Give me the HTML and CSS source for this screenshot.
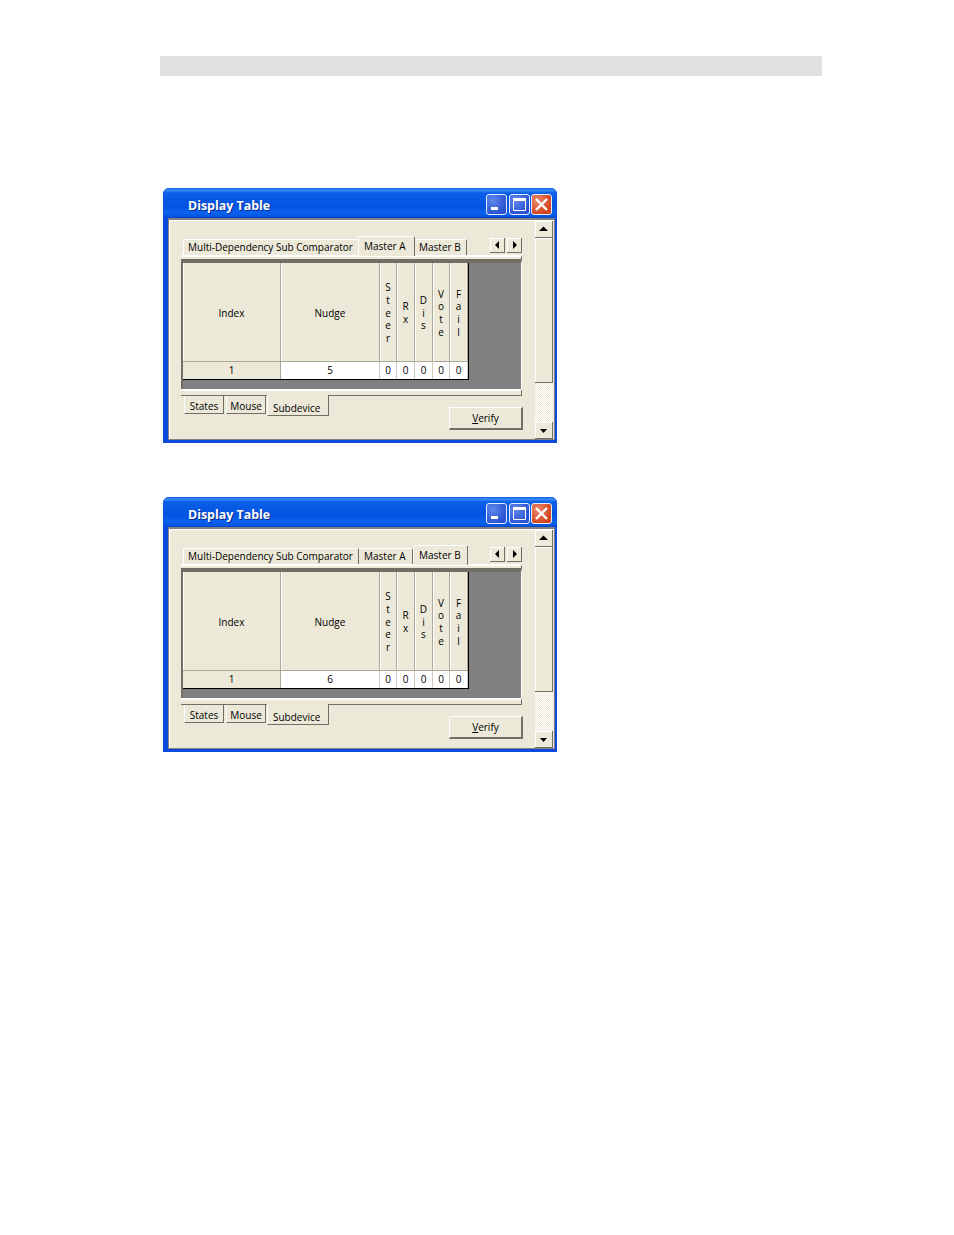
FILE: index.html
```html
<!DOCTYPE html>
<html lang="en">

<head>
    <meta charset="UTF-8">
    <title>Display Table</title>
    <link rel="stylesheet" href="styles.css">
</head>

<body>
    <div class="page-bar"></div>

    <!-- first window: Master A selected -->
    <div class="window first">
        <div class="titlebar">
            <span class="title">Display Table</span>
            <div class="caption-buttons">
                <div class="cap-btn"><svg viewBox="0 0 21 21" width="21" height="21"><rect x="5" y="13" width="7" height="3" fill="#fff"/></svg></div>
                <div class="cap-btn"><svg viewBox="0 0 21 21" width="21" height="21"><path d="M4.500 4.500h12v12h-12z" fill="none" stroke="#fff"/><rect x="4" y="4" width="13" height="3" fill="#fff"/></svg></div>
                <div class="cap-btn close"><svg viewBox="0 0 21 21" width="21" height="21"><path d="M5 5l11 11M16 5L5 16" stroke="#fff" stroke-width="2.400"/></svg></div>
            </div>
        </div>
        <div class="client">
            <div class="main">
                <div class="tabs-top">
                    <div class="tab wide">Multi-Dependency Sub Comparator</div>
                    <div class="tab tab-a active">Master A</div>
                    <div class="tab tab-b">Master B</div>
                    <div class="tab-arrows">
                        <div class="btn-small"><svg viewBox="0 0 15 15" width="15" height="15"><path d="M9 3v8L5 7z"/></svg></div>
                        <div class="btn-small"><svg viewBox="0 0 15 15" width="15" height="15"><path d="M6 3v8l4-4z"/></svg></div>
                    </div>
                </div>
                <div class="bar"></div>
                <div class="grid-wrap">
                    <div class="grid">
                        <div class="head">Index</div>
                        <div class="head">Nudge</div>
                        <div class="head"><span class="stack">S<br>t<br>e<br>e<br>r</span></div>
                        <div class="head"><span class="stack">R<br>x</span></div>
                        <div class="head"><span class="stack">D<br>i<br>s</span></div>
                        <div class="head"><span class="stack">V<br>o<br>t<br>e</span></div>
                        <div class="head"><span class="stack">F<br>a<br>i<br>l</span></div>
                        <div class="cell index">1</div>
                        <div class="cell">5</div>
                        <div class="cell">0</div>
                        <div class="cell">0</div>
                        <div class="cell">0</div>
                        <div class="cell">0</div>
                        <div class="cell">0</div>
                    </div>
                </div>
                <div class="bar bar-low"></div>
                <div class="bottom-row">
                    <div class="tabs-bottom">
                        <div class="btab">States</div>
                        <div class="btab">Mouse</div>
                        <div class="btab active">Subdevice</div>
                    </div>
                    <div class="verify"><u>V</u>erify</div>
                </div>
            </div>
            <div class="scrollbar">
                <div class="btn-scroll"><svg viewBox="0 0 17 17" width="17" height="17"><path d="M4 10h9L8.500 5.500z"/></svg></div>
                <div class="thumb"></div>
                <div class="track"></div>
                <div class="btn-scroll"><svg viewBox="0 0 17 17" width="17" height="17"><path d="M5 7h7l-3.500 4z"/></svg></div>
            </div>
        </div>
    </div>

    <!-- second window: Master B selected -->
    <div class="window second">
        <div class="titlebar">
            <span class="title">Display Table</span>
            <div class="caption-buttons">
                <div class="cap-btn"><svg viewBox="0 0 21 21" width="21" height="21"><rect x="5" y="13" width="7" height="3" fill="#fff"/></svg></div>
                <div class="cap-btn"><svg viewBox="0 0 21 21" width="21" height="21"><path d="M4.500 4.500h12v12h-12z" fill="none" stroke="#fff"/><rect x="4" y="4" width="13" height="3" fill="#fff"/></svg></div>
                <div class="cap-btn close"><svg viewBox="0 0 21 21" width="21" height="21"><path d="M5 5l11 11M16 5L5 16" stroke="#fff" stroke-width="2.400"/></svg></div>
            </div>
        </div>
        <div class="client">
            <div class="main">
                <div class="tabs-top">
                    <div class="tab wide">Multi-Dependency Sub Comparator</div>
                    <div class="tab tab-a2">Master A</div>
                    <div class="tab tab-b2 active">Master B</div>
                    <div class="tab-arrows arrows2">
                        <div class="btn-small"><svg viewBox="0 0 15 15" width="15" height="15"><path d="M9 3v8L5 7z"/></svg></div>
                        <div class="btn-small"><svg viewBox="0 0 15 15" width="15" height="15"><path d="M6 3v8l4-4z"/></svg></div>
                    </div>
                </div>
                <div class="bar"></div>
                <div class="grid-wrap">
                    <div class="grid">
                        <div class="head">Index</div>
                        <div class="head">Nudge</div>
                        <div class="head"><span class="stack">S<br>t<br>e<br>e<br>r</span></div>
                        <div class="head"><span class="stack">R<br>x</span></div>
                        <div class="head"><span class="stack">D<br>i<br>s</span></div>
                        <div class="head"><span class="stack">V<br>o<br>t<br>e</span></div>
                        <div class="head"><span class="stack">F<br>a<br>i<br>l</span></div>
                        <div class="cell index">1</div>
                        <div class="cell">6</div>
                        <div class="cell">0</div>
                        <div class="cell">0</div>
                        <div class="cell">0</div>
                        <div class="cell">0</div>
                        <div class="cell">0</div>
                    </div>
                </div>
                <div class="bar bar-low"></div>
                <div class="bottom-row">
                    <div class="tabs-bottom">
                        <div class="btab">States</div>
                        <div class="btab">Mouse</div>
                        <div class="btab active">Subdevice</div>
                    </div>
                    <div class="verify"><u>V</u>erify</div>
                </div>
            </div>
            <div class="scrollbar">
                <div class="btn-scroll"><svg viewBox="0 0 17 17" width="17" height="17"><path d="M4 10h9L8.500 5.500z"/></svg></div>
                <div class="thumb"></div>
                <div class="track"></div>
                <div class="btn-scroll"><svg viewBox="0 0 17 17" width="17" height="17"><path d="M5 7h7l-3.500 4z"/></svg></div>
            </div>
        </div>
    </div>
</body>

</html>
```

FILE: styles.css
```css
html,
body {
    margin: 0;
    padding: 0;
}

body {
    background-color: #fff;
    font-family: "Open Sans", "Noto Sans", sans-serif;
    font-size: 10px;
    color: #000;
    height: 1235px;
    padding: 56px 0 0 160px;
    box-sizing: border-box;
}

.page-bar {
    width: 662px;
    height: 20px;
    background-color: #e0e0e0;
}

/* window frame */
.window {
    width: 394px;
    height: 255px;
    margin-left: 3px;
    box-sizing: border-box;
    background-color: #0c49dc;
    border-radius: 6px 6px 0 0;
    padding: 0 2px 3px 5px;
    display: flex;
    flex-direction: column;
}

.first {
    margin-top: 112px;
}

.second {
    margin-top: 54px;
}

.titlebar {
    height: 30px;
    margin: 0 -2px 0 -5px;
    flex-shrink: 0;
    display: flex;
    align-items: center;
    justify-content: space-between;
    padding: 2px 5px 0 25px;
    box-sizing: border-box;
    border-radius: 6px 6px 0 0;
    background: linear-gradient(to bottom, #0a5be0 0, #3b8cf6 2px, #0a5fe8 5px, #0453e0 18px, #0a62ee 25px, #0553dc 29px, #0440b8 30px);
}

.title {
    color: #fff;
    font-family: "Open Sans", sans-serif;
    font-weight: bold;
    font-size: 12.400px;
    padding-top: 2px;
    text-shadow: 1px 1px 0 #0a2f90;
}

.caption-buttons {
    display: flex;
    gap: 1.500px;
}

.cap-btn {
    width: 21px;
    height: 21px;
    box-sizing: border-box;
    border: 1px solid #e8eefc;
    border-radius: 3px;
    background: radial-gradient(circle at 30% 30%, #5f88ec, #2a52d0 75%);
    overflow: hidden;
}

.cap-btn svg {
    display: block;
    margin: -1px;
}

.close {
    background: radial-gradient(circle at 30% 30%, #ec8a6c, #d0431c 75%);
}

/* client area */
.client {
    flex-grow: 1;
    display: flex;
    background-color: #ece9d8;
    border: 1px solid #808080;
    border-top-width: 2px;
    box-shadow: inset 1px 1px 0 #fff;
    min-height: 0;
}

.main {
    width: 366px;
    padding: 16px 0 0 12px;
    box-sizing: border-box;
}

/* top tabs */
.tabs-top {
    width: 341px;
    height: 19px;
    display: flex;
    align-items: flex-end;
    position: relative;
    z-index: 1;
}

.tab {
    height: 16px;
    line-height: 15px;
    padding: 0 5px;
    box-sizing: border-box;
    white-space: nowrap;
    border-top: 1px solid #fff;
    border-right: 1px solid #716f64;
    border-radius: 2px 2px 0 0;
}

.wide {
    width: 175px;
    margin-left: 2px;
    border-left: 1px solid #fff;
    border-right: none;
    padding-left: 4px;
}

.tab.active {
    height: 20px;
    line-height: 19px;
    margin-bottom: -1px;
    background-color: #ece9d8;
    border-left: 1px solid #fff;
    border-right: 1px solid #716f64;
}

.tab-a {
    width: 57px;
}

.tab-b {
    width: 52px;
    padding-left: 4px;
}

.tab-a2 {
    width: 55px;
    padding-left: 5px;
    border-left: 1px solid #716f64;
}

.tab-b2 {
    width: 55px;
}

.tab-arrows {
    display: flex;
    gap: 2px;
    margin: 0 0 2px 23px;
}

.arrows2 {
    margin-left: 22px;
}

.btn-small {
    width: 15px;
    height: 15px;
    border-right: 1px solid #716f64;
    border-bottom: 1px solid #716f64;
    box-shadow: inset 1px 1px 0 #fff;
    box-sizing: border-box;
}

.btn-small svg,
.btn-scroll svg {
    display: block;
}

.bar {
    width: 341px;
    height: 5px;
    box-sizing: border-box;
    border-top: 2px solid #fff;
    border-right: 1px solid #716f64;
    border-bottom: 1px solid #716f64;
}

/* table */
.grid-wrap {
    width: 341px;
    height: 129px;
    box-sizing: border-box;
    background-color: #808080;
    border-top: 3px solid #716f64;
    border-left: 2px solid #716f64;
    border-right: 1px solid #fff;
}

.grid {
    width: 285px;
    display: grid;
    grid-template-columns: 98px 99px 17px 18px 18px 17px 18px;
    grid-template-rows: 99px 17px;
    border-right: 1px solid #000;
    border-bottom: 1px solid #000;
}

.head {
    background-color: #ece9d8;
    border-right: 1px solid #aca899;
    border-bottom: 1px solid #aca899;
    box-shadow: inset 1px 0 0 #fff;
    padding-top: 2px;
    box-sizing: border-box;
    display: flex;
    align-items: center;
    justify-content: center;
    text-align: center;
}

.stack {
    line-height: 12.700px;
}

.cell {
    background-color: #fff;
    border-right: 1px solid #cfccbc;
    line-height: 16px;
    text-align: center;
}

.index {
    background-color: #ece9d8;
    border-right: 1px solid #aca899;
}

/* bottom tabs + button */
.bar-low {
    height: 7px;
}

.bottom-row {
    width: 342px;
    display: flex;
    justify-content: space-between;
    align-items: flex-start;
}

.tabs-bottom {
    display: flex;
    padding-left: 3px;
    gap: 2px;
}

.btab {
    width: 40px;
    height: 18px;
    line-height: 20px;
    text-align: center;
    box-sizing: border-box;
    border-right: 1px solid #716f64;
    border-bottom: 1px solid #716f64;
    border-left: 1px solid #fff;
}

.btab.active {
    width: 62px;
    height: 21px;
    margin: -1px 0 0 -1px;
    line-height: 27px;
    text-align: left;
    padding-left: 5px;
    background-color: #ece9d8;
    position: relative;
}

.verify {
    width: 74px;
    height: 23px;
    margin-top: 11px;
    box-sizing: border-box;
    line-height: 20px;
    text-align: center;
    border-top: 1px solid #fff;
    border-left: 1px solid #fff;
    border-right: 2px solid #716f64;
    border-bottom: 2px solid #716f64;
}

/* scrollbar */
.scrollbar {
    width: 18px;
    padding-top: 1px;
    display: flex;
    flex-direction: column;
}

.btn-scroll {
    height: 17px;
    width: 18px;
    box-sizing: border-box;
    border-right: 1px solid #716f64;
    border-bottom: 1px solid #716f64;
    box-shadow: inset 1px 1px 0 #fff;
}

.thumb {
    height: 145px;
    box-sizing: border-box;
    border-right: 1px solid #716f64;
    border-bottom: 1px solid #716f64;
    box-shadow: inset 1px 1px 0 #fff;
}

.track {
    flex-grow: 1;
    background: repeating-conic-gradient(#fff 0 25%, #ece9d8 0 50%) 0 0 / 2px 2px;
}
```
